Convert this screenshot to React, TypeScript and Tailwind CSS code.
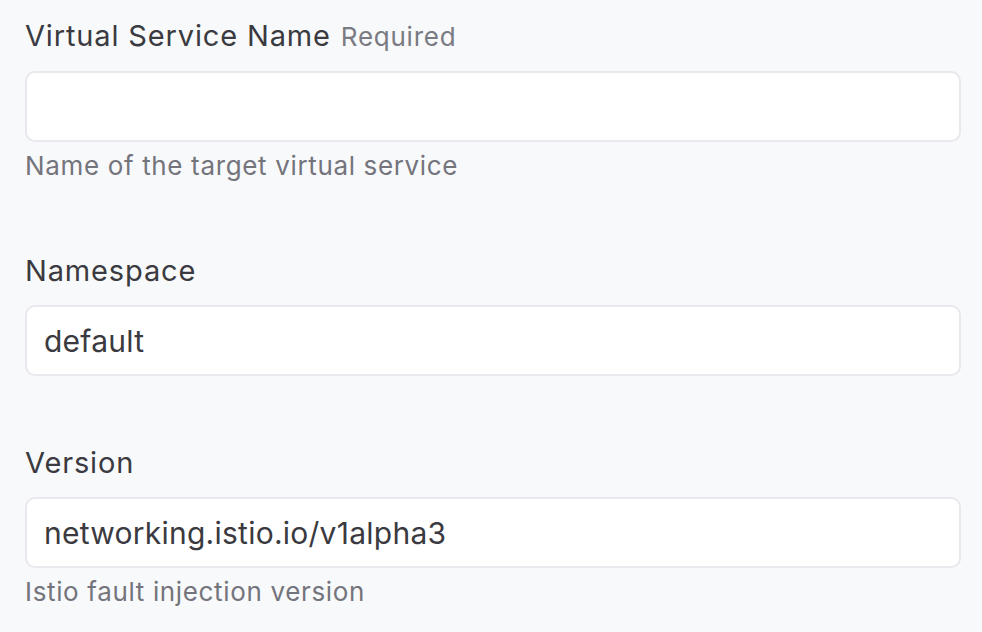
import React from "react";

function Field({
  label,
  required,
  value,
  help,
}: {
  label: string;
  required?: boolean;
  value: string;
  help?: string;
}) {
  return (
    <div className="flex flex-col">
      <label className="flex items-baseline gap-[10px] text-[29px] leading-[40px] font-normal tracking-[0.85px] text-[#3a3a40]">
        <span>{label}</span>
        {required && (
          <span className="text-[26px] font-normal tracking-[0.75px] text-[#7a7a82]">Required</span>
        )}
      </label>
      <input
        readOnly
        value={value}
        className="mt-[14px] h-[71px] w-full rounded-[10px] border-2 border-[#e8e8ed] bg-white px-[17px] text-[30px] tracking-[0.25px] text-[#3a3a40] outline-none"
        style={{ fontFamily: "Inter, 'Noto Sans', sans-serif" }}
      />
      {help && (
        <p className="mt-[6px] text-[26px] leading-[36px] tracking-[0.65px] text-[#74747c]">{help}</p>
      )}
    </div>
  );
}

export default function App() {
  return (
    <div
      className="h-[632px] w-[982px] overflow-hidden bg-[#f8f9fb] pl-[25px] pr-[21px] pt-[16px]"
      style={{ fontFamily: "Inter, 'Noto Sans', sans-serif" }}
    >
      <div className="flex flex-col gap-[67px]">
        <Field
          label="Virtual Service Name"
          required
          value=""
          help="Name of the target virtual service"
        />
        <Field label="Namespace" value="default" />
        <Field
          label="Version"
          value="networking.istio.io/v1alpha3"
          help="Istio fault injection version"
        />
      </div>
    </div>
  );
}
